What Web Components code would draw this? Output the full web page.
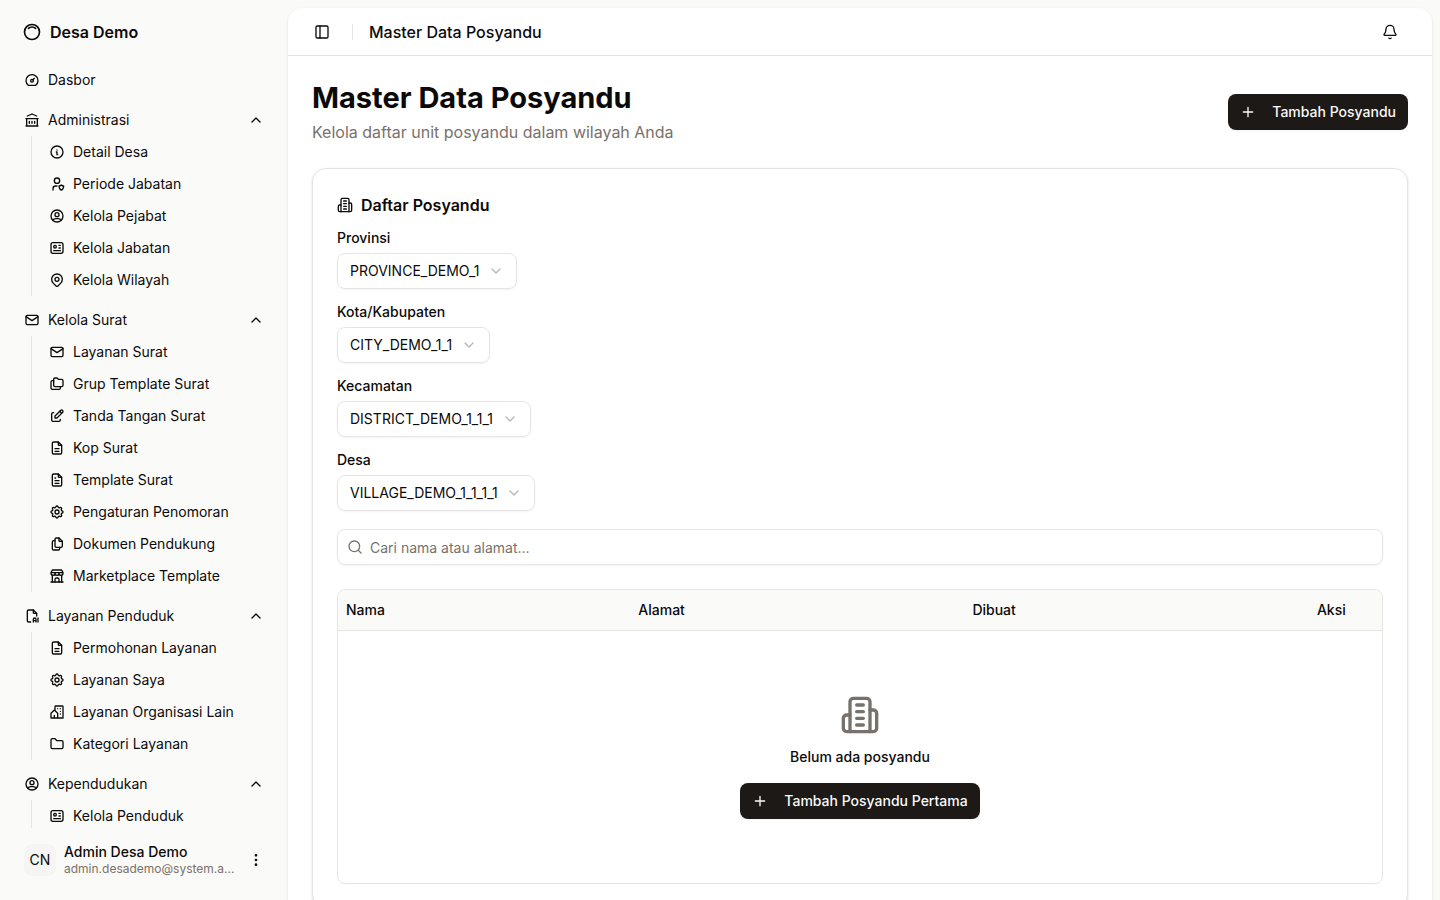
<!DOCTYPE html>
<html lang="id">
<head>
<meta charset="UTF-8">
<meta name="viewport" content="width=device-width, initial-scale=1">
<title>Master Data Posyandu</title>
<style>
    :root {
        --background: #ffffff;
        --sidebar: #fafaf9;
        --foreground: #0c0a09;
        --muted: #f5f5f4;
        --muted-foreground: #79716b;
        --border: #e7e5e4;
        --primary: #1c1917;
        --primary-foreground: #fafaf9;
        --shadow-xs: 0 1px 2px rgba(0, 0, 0, 0.05);
        --shadow-sm: 0 1px 3px rgba(0, 0, 0, 0.1), 0 1px 2px -1px rgba(0, 0, 0, 0.1);
    }

    body {
        margin: 0;
        background: var(--sidebar);
        color: var(--foreground);
        font-family: Inter, "Liberation Sans", sans-serif;
        font-size: 14px;
        line-height: 20px;
    }
</style>
</head>
<body>
<app-layout>
    <app-sidebar slot="sidebar" name="Desa Demo">
        <nav-item icon="dashboard">Dasbor</nav-item>
        <nav-group icon="bank" label="Administrasi">
            <nav-item icon="info">Detail Desa</nav-item>
            <nav-item icon="user-shield">Periode Jabatan</nav-item>
            <nav-item icon="user-circle">Kelola Pejabat</nav-item>
            <nav-item icon="id">Kelola Jabatan</nav-item>
            <nav-item icon="map-pin">Kelola Wilayah</nav-item>
        </nav-group>
        <nav-group icon="mail" label="Kelola Surat">
            <nav-item icon="mail">Layanan Surat</nav-item>
            <nav-item icon="folders">Grup Template Surat</nav-item>
            <nav-item icon="edit">Tanda Tangan Surat</nav-item>
            <nav-item icon="file-description">Kop Surat</nav-item>
            <nav-item icon="file-text">Template Surat</nav-item>
            <nav-item icon="settings">Pengaturan Penomoran</nav-item>
            <nav-item icon="files">Dokumen Pendukung</nav-item>
            <nav-item icon="store">Marketplace Template</nav-item>
        </nav-group>
        <nav-group icon="file-ai" label="Layanan Penduduk">
            <nav-item icon="file-description">Permohonan Layanan</nav-item>
            <nav-item icon="settings">Layanan Saya</nav-item>
            <nav-item icon="community">Layanan Organisasi Lain</nav-item>
            <nav-item icon="folder">Kategori Layanan</nav-item>
        </nav-group>
        <nav-group icon="user-circle" label="Kependudukan">
            <nav-item icon="id">Kelola Penduduk</nav-item>
        </nav-group>
        <user-menu slot="footer" initials="CN" name="Admin Desa Demo" email="admin.desademo@system.a..."></user-menu>
    </app-sidebar>

    <site-header>Master Data Posyandu</site-header>
    <page-content>
        <page-title heading="Master Data Posyandu" description="Kelola daftar unit posyandu dalam wilayah Anda">
            <app-button icon="plus">Tambah Posyandu</app-button>
        </page-title>
        <app-card icon="building" heading="Daftar Posyandu">
            <filter-list>
                <select-field label="Provinsi" value="PROVINCE_DEMO_1"></select-field>
                <select-field label="Kota/Kabupaten" value="CITY_DEMO_1_1"></select-field>
                <select-field label="Kecamatan" value="DISTRICT_DEMO_1_1_1"></select-field>
                <select-field label="Desa" value="VILLAGE_DEMO_1_1_1_1"></select-field>
            </filter-list>
            <search-field placeholder="Cari nama atau alamat..."></search-field>
            <posyandu-table>
                <empty-state icon="building" message="Belum ada posyandu">
                    <app-button icon="plus">Tambah Posyandu Pertama</app-button>
                </empty-state>
            </posyandu-table>
        </app-card>
    </page-content>
</app-layout>

<script>
const ICONS = {
    'logo': '<path d="M5.636 5.636a9 9 0 1 0 12.728 12.728a9 9 0 0 0 -12.728 -12.728z"/><path d="M16.243 7.757a6 6 0 0 0 -8.486 0"/>',
    'dashboard': '<circle cx="12" cy="13" r="2"/><path d="M13.45 11.55l2.05 -2.05"/><path d="M6.4 20a9 9 0 1 1 11.2 0z"/>',
    'bank': '<path d="M3 21h18M3 10h18M5 6l7 -3l7 3M4 10v11M20 10v11M8 14v3M12 14v3M16 14v3"/>',
    'info': '<circle cx="12" cy="12" r="9"/><path d="M12 9h.01M11 12h1v4h1"/>',
    'user-shield': '<path d="M6 21v-2a4 4 0 0 1 4 -4h2"/><path d="M22 15c0 4 -2.5 6 -3.5 6s-3.5 -2 -3.5 -6c1 0 2.5 -.5 3.5 -1.5c1 1 2.5 1.5 3.5 1.5z"/><circle cx="12" cy="7" r="4"/>',
    'user-circle': '<circle cx="12" cy="12" r="9"/><circle cx="12" cy="10" r="3"/><path d="M6.168 18.849a4 4 0 0 1 3.832 -2.849h4a4 4 0 0 1 3.834 2.855"/>',
    'id': '<rect x="3" y="4" width="18" height="16" rx="3"/><circle cx="9" cy="10" r="2"/><path d="M15 8h2M15 12h2M7 16h10"/>',
    'map-pin': '<circle cx="12" cy="11" r="3"/><path d="M17.657 16.657l-4.243 4.243a2 2 0 0 1 -2.827 0l-4.244 -4.243a8 8 0 1 1 11.314 0z"/>',
    'mail': '<rect x="3" y="5" width="18" height="14" rx="2"/><path d="M3 7l9 6l9 -6"/>',
    'folders': '<path d="M9 3h3l2 2h5a2 2 0 0 1 2 2v7a2 2 0 0 1 -2 2h-10a2 2 0 0 1 -2 -2v-9a2 2 0 0 1 2 -2"/><path d="M17 16v2a2 2 0 0 1 -2 2h-10a2 2 0 0 1 -2 -2v-9a2 2 0 0 1 2 -2h2"/>',
    'edit': '<path d="M7 7h-1a2 2 0 0 0 -2 2v9a2 2 0 0 0 2 2h9a2 2 0 0 0 2 -2v-1"/><path d="M20.385 6.585a2.1 2.1 0 0 0 -2.97 -2.97l-8.415 8.385v3h3l8.385 -8.415z"/><path d="M16 5l3 3"/>',
    'file-description': '<path d="M14 3v4a1 1 0 0 0 1 1h4"/><path d="M17 21h-10a2 2 0 0 1 -2 -2v-14a2 2 0 0 1 2 -2h7l5 5v11a2 2 0 0 1 -2 2z"/><path d="M9 17h6M9 13h6"/>',
    'file-text': '<path d="M14 3v4a1 1 0 0 0 1 1h4"/><path d="M17 21h-10a2 2 0 0 1 -2 -2v-14a2 2 0 0 1 2 -2h7l5 5v11a2 2 0 0 1 -2 2z"/><path d="M9 9h1M9 13h6M9 17h6"/>',
    'settings': '<path d="M10.325 4.317c.426 -1.756 2.924 -1.756 3.35 0a1.724 1.724 0 0 0 2.573 1.066c1.543 -.94 3.31 .826 2.37 2.37a1.724 1.724 0 0 0 1.065 2.572c1.756 .426 1.756 2.924 0 3.35a1.724 1.724 0 0 0 -1.066 2.573c.94 1.543 -.826 3.31 -2.37 2.37a1.724 1.724 0 0 0 -2.572 1.065c-.426 1.756 -2.924 1.756 -3.35 0a1.724 1.724 0 0 0 -2.573 -1.066c-1.543 .94 -3.31 -.826 -2.37 -2.37a1.724 1.724 0 0 0 -1.065 -2.572c-1.756 -.426 -1.756 -2.924 0 -3.35a1.724 1.724 0 0 0 1.066 -2.573c-.94 -1.543 .826 -3.31 2.37 -2.37c1 .608 2.296 .07 2.572 -1.065z"/><circle cx="12" cy="12" r="3"/>',
    'files': '<path d="M15 3v4a1 1 0 0 0 1 1h4"/><path d="M18 17h-7a2 2 0 0 1 -2 -2v-10a2 2 0 0 1 2 -2h4l5 5v7a2 2 0 0 1 -2 2z"/><path d="M16 17v2a2 2 0 0 1 -2 2h-7a2 2 0 0 1 -2 -2v-10a2 2 0 0 1 2 -2h2"/>',
    'store': '<path d="M3 21h18"/><path d="M3 7v1a3 3 0 0 0 6 0v-1m0 1a3 3 0 0 0 6 0v-1m0 1a3 3 0 0 0 6 0v-1h-18l2 -4h14l2 4"/><path d="M5 21v-10.15M19 21v-10.15"/><path d="M9 21v-4a2 2 0 0 1 2 -2h2a2 2 0 0 1 2 2v4"/>',
    'file-ai': '<path d="M14 3v4a1 1 0 0 0 1 1h4"/><path d="M10 21h-3a2 2 0 0 1 -2 -2v-14a2 2 0 0 1 2 -2h7l5 5v4"/><path d="M14 21v-4a2 2 0 1 1 4 0v4M14 19h4M21 15v6"/>',
    'community': '<path d="M8 9l5 5v7h-5v-4m0 4h-5v-7l5 -5m1 1v-6a1 1 0 0 1 1 -1h10a1 1 0 0 1 1 1v17h-8"/><path d="M13 7v.01M17 7v.01M17 11v.01M17 15v.01"/>',
    'folder': '<path d="M5 4h4l3 3h7a2 2 0 0 1 2 2v8a2 2 0 0 1 -2 2h-14a2 2 0 0 1 -2 -2v-11a2 2 0 0 1 2 -2"/>',
    'dots': '<circle cx="12" cy="12" r="1"/><circle cx="12" cy="19" r="1"/><circle cx="12" cy="5" r="1"/>',
    'chevron-up': '<path d="m18 15-6-6-6 6"/>',
    'chevron-down': '<path d="m6 9 6 6 6-6"/>',
    'panel': '<rect x="3" y="3" width="18" height="18" rx="2"/><path d="M9 3v18"/>',
    'bell': '<path d="M10.268 21a2 2 0 0 0 3.464 0"/><path d="M3.262 15.326A1 1 0 0 0 4 17h16a1 1 0 0 0 .74-1.673C19.41 13.956 18 12.499 18 8A6 6 0 0 0 6 8c0 4.499-1.411 5.956-2.738 7.326"/>',
    'plus': '<path d="M5 12h14M12 5v14"/>',
    'search': '<path d="m21 21-4.34-4.34"/><circle cx="11" cy="11" r="8"/>',
    'building': '<path d="M6 22V4a2 2 0 0 1 2-2h8a2 2 0 0 1 2 2v18Z"/><path d="M6 12H4a2 2 0 0 0-2 2v6a2 2 0 0 0 2 2h2"/><path d="M18 9h2a2 2 0 0 1 2 2v9a2 2 0 0 1-2 2h-2"/><path d="M10 6h4M10 10h4M10 14h4M10 18h4"/>'
};

// Base: each component only has to return its markup
class BaseElement extends HTMLElement {
    constructor() {
        super();
        this.attachShadow({ mode: 'open' });
    }

    connectedCallback() {
        this.shadowRoot.innerHTML = this.template();
    }

    attr(name) {
        return this.getAttribute(name) || '';
    }
}

class AppIcon extends BaseElement {
    template() {
        return `
            <style>
                :host { display: block; flex: none; width: 16px; height: 16px; }
                svg { display: block; width: 100%; height: 100%; }
            </style>
            <svg viewBox="0 0 24 24" fill="none" stroke="currentColor" stroke-width="2"
                stroke-linecap="round" stroke-linejoin="round" aria-hidden="true">${ICONS[this.attr('name')] || ''}</svg>
        `;
    }
}

class AppLayout extends BaseElement {
    template() {
        return `
            <style>
                :host { display: flex; align-items: stretch; min-height: 100vh; }
                main {
                    flex: 1;
                    min-width: 0;
                    margin: 8px 8px 8px 0;
                    background: var(--background);
                    border-radius: 14px;
                    box-shadow: var(--shadow-sm);
                }
            </style>
            <slot name="sidebar"></slot>
            <main><slot></slot></main>
        `;
    }
}

class AppSidebar extends BaseElement {
    template() {
        return `
            <style>
                :host {
                    display: flex;
                    flex-direction: column;
                    flex: none;
                    position: sticky;
                    top: 0;
                    box-sizing: border-box;
                    width: 288px;
                    height: 100vh;
                    padding: 8px;
                }
                header, footer { padding: 8px; }
                .brand {
                    display: flex;
                    align-items: center;
                    gap: 8px;
                    height: 32px;
                    padding: 0 6px;
                    color: inherit;
                    font-size: 16px;
                    font-weight: 600;
                    text-decoration: none;
                }
                .brand app-icon { width: 20px; height: 20px; }
                nav {
                    display: flex;
                    flex-direction: column;
                    gap: 8px;
                    flex: 1;
                    min-height: 0;
                    padding: 8px;
                    box-sizing: border-box;
                    overflow-y: auto;
                    scrollbar-width: none;
                }
            </style>
            <header>
                <a class="brand" href="#"><app-icon name="logo"></app-icon><span>${this.attr('name')}</span></a>
            </header>
            <nav><slot></slot></nav>
            <footer><slot name="footer"></slot></footer>
        `;
    }
}

class NavItem extends BaseElement {
    template() {
        return `
            <style>
                :host { display: block; flex: none; }
                a {
                    display: flex;
                    align-items: center;
                    gap: 8px;
                    height: 32px;
                    padding: 0 8px;
                    border-radius: 8px;
                    color: inherit;
                    text-decoration: none;
                    white-space: nowrap;
                }
                a:hover { background: var(--muted); }
            </style>
            <a href="#"><app-icon name="${this.attr('icon')}"></app-icon><span><slot></slot></span></a>
        `;
    }
}

class NavGroup extends BaseElement {
    connectedCallback() {
        super.connectedCallback();
        const button = this.shadowRoot.querySelector('button');
        const list = this.shadowRoot.querySelector('.list');
        button.addEventListener('click', () => {
            list.hidden = !list.hidden;
            button.setAttribute('aria-expanded', String(!list.hidden));
        });
    }

    template() {
        return `
            <style>
                :host { display: block; flex: none; }
                button {
                    display: flex;
                    align-items: center;
                    gap: 8px;
                    width: 100%;
                    height: 32px;
                    padding: 0 8px;
                    border: 0;
                    border-radius: 8px;
                    background: none;
                    color: inherit;
                    font: inherit;
                    text-align: left;
                }
                button:hover { background: var(--muted); }
                button span { flex: 1; }
                button[aria-expanded="false"] .chevron { transform: rotate(180deg); }
                .list {
                    margin-left: 15px;
                    padding-left: 9px;
                    border-left: 1px solid var(--border);
                }
            </style>
            <button type="button" aria-expanded="true">
                <app-icon name="${this.attr('icon')}"></app-icon>
                <span>${this.attr('label')}</span>
                <app-icon class="chevron" name="chevron-up"></app-icon>
            </button>
            <div class="list"><slot></slot></div>
        `;
    }
}

class UserMenu extends BaseElement {
    template() {
        return `
            <style>
                :host { display: block; }
                button {
                    display: flex;
                    align-items: center;
                    gap: 8px;
                    width: 100%;
                    height: 48px;
                    padding: 0 8px;
                    border: 0;
                    border-radius: 8px;
                    background: none;
                    color: inherit;
                    font: inherit;
                    text-align: left;
                }
                .avatar {
                    display: grid;
                    place-items: center;
                    flex: none;
                    width: 32px;
                    height: 32px;
                    border-radius: 8px;
                    background: var(--muted);
                }
                .info { display: grid; flex: 1; min-width: 0; }
                .name { font-weight: 500; line-height: 18px; }
                .email {
                    overflow: hidden;
                    color: var(--muted-foreground);
                    font-size: 12px;
                    line-height: 16px;
                    text-overflow: ellipsis;
                    white-space: nowrap;
                }
            </style>
            <button type="button">
                <span class="avatar">${this.attr('initials')}</span>
                <span class="info">
                    <span class="name">${this.attr('name')}</span>
                    <span class="email">${this.attr('email')}</span>
                </span>
                <app-icon name="dots"></app-icon>
            </button>
        `;
    }
}

class SiteHeader extends BaseElement {
    template() {
        return `
            <style>
                :host {
                    display: flex;
                    align-items: center;
                    gap: 16px;
                    box-sizing: border-box;
                    height: 48px;
                    padding: 0 24px 0 20px;
                    border-bottom: 1px solid var(--border);
                }
                button {
                    display: grid;
                    place-items: center;
                    width: 28px;
                    height: 28px;
                    padding: 0;
                    border: 0;
                    border-radius: 8px;
                    background: none;
                    color: inherit;
                }
                button:hover { background: var(--muted); }
                .bell { width: 36px; height: 36px; margin-left: auto; }
                .separator { width: 1px; height: 16px; background: var(--border); }
                .title { font-size: 16px; font-weight: 500; line-height: 24px; }
            </style>
            <button type="button" aria-label="Toggle Sidebar"><app-icon name="panel"></app-icon></button>
            <div class="separator"></div>
            <div class="title"><slot></slot></div>
            <button class="bell" type="button" aria-label="Notifikasi"><app-icon name="bell"></app-icon></button>
        `;
    }
}

class PageContent extends BaseElement {
    template() {
        return `
            <style>
                :host { display: flex; flex-direction: column; gap: 24px; padding: 24px; }
            </style>
            <slot></slot>
        `;
    }
}

class PageTitle extends BaseElement {
    template() {
        return `
            <style>
                :host { display: flex; align-items: center; justify-content: space-between; gap: 16px; }
                h1 { margin: 0 0 4px; font-size: 29px; font-weight: 700; line-height: 36px; }
                p { margin: 0; color: var(--muted-foreground); font-size: 16px; line-height: 24px; }
            </style>
            <div>
                <h1>${this.attr('heading')}</h1>
                <p>${this.attr('description')}</p>
            </div>
            <slot></slot>
        `;
    }
}

class AppButton extends BaseElement {
    template() {
        return `
            <style>
                :host { display: inline-block; }
                button {
                    display: flex;
                    align-items: center;
                    gap: 16px;
                    height: 36px;
                    padding: 0 12px;
                    border: 0;
                    border-radius: 8px;
                    background: var(--primary);
                    color: var(--primary-foreground);
                    font: inherit;
                    font-weight: 500;
                    white-space: nowrap;
                    box-shadow: var(--shadow-xs);
                }
                button:hover { opacity: 0.9; }
            </style>
            <button type="button"><app-icon name="${this.attr('icon')}"></app-icon><span><slot></slot></span></button>
        `;
    }
}

class AppCard extends BaseElement {
    template() {
        return `
            <style>
                :host {
                    display: block;
                    padding: 24px;
                    border: 1px solid var(--border);
                    border-radius: 14px;
                    background: var(--background);
                    box-shadow: var(--shadow-sm);
                }
                h2 {
                    display: flex;
                    align-items: center;
                    gap: 8px;
                    margin: 0 0 14px;
                    font-size: 16px;
                    font-weight: 600;
                    line-height: 24px;
                }
            </style>
            <h2><app-icon name="${this.attr('icon')}"></app-icon><span>${this.attr('heading')}</span></h2>
            <slot></slot>
        `;
    }
}

class FilterList extends BaseElement {
    template() {
        return `
            <style>
                :host { display: flex; flex-direction: column; align-items: flex-start; gap: 16px; margin-bottom: 18px; }
            </style>
            <slot></slot>
        `;
    }
}

class SelectField extends BaseElement {
    template() {
        return `
            <style>
                :host { display: grid; gap: 8px; }
                label { font-weight: 500; line-height: 14px; }
                .control { display: grid; align-items: center; justify-items: end; }
                .control > * { grid-area: 1 / 1; }
                select {
                    appearance: none;
                    height: 36px;
                    margin: 0;
                    padding: 0 36px 0 12px;
                    border: 1px solid var(--border);
                    border-radius: 8px;
                    background: transparent;
                    color: inherit;
                    font: inherit;
                    box-shadow: var(--shadow-xs);
                }
                app-icon { margin-right: 13px; color: var(--muted-foreground); opacity: 0.5; pointer-events: none; }
            </style>
            <label for="field">${this.attr('label')}</label>
            <div class="control">
                <select id="field"><option>${this.attr('value')}</option></select>
                <app-icon name="chevron-down"></app-icon>
            </div>
        `;
    }
}

class SearchField extends BaseElement {
    template() {
        return `
            <style>
                :host { display: grid; align-items: center; margin-bottom: 24px; }
                input, app-icon { grid-area: 1 / 1; }
                input {
                    box-sizing: border-box;
                    width: 100%;
                    height: 36px;
                    margin: 0;
                    padding: 0 12px 0 32px;
                    border: 1px solid var(--border);
                    border-radius: 8px;
                    background: transparent;
                    color: inherit;
                    font: inherit;
                    box-shadow: var(--shadow-xs);
                }
                input::placeholder { color: var(--muted-foreground); opacity: 1; }
                app-icon { margin-left: 10px; color: var(--muted-foreground); pointer-events: none; }
            </style>
            <input type="text" placeholder="${this.attr('placeholder')}" aria-label="${this.attr('placeholder')}">
            <app-icon name="search"></app-icon>
        `;
    }
}

class PosyanduTable extends BaseElement {
    template() {
        return `
            <style>
                :host { display: block; overflow: hidden; border: 1px solid var(--border); border-radius: 8px; }
                table { width: 100%; border-collapse: separate; border-spacing: 0; table-layout: fixed; }
                th {
                    box-sizing: border-box;
                    height: 41px;
                    padding: 0 8px;
                    border-bottom: 1px solid var(--border);
                    background: var(--sidebar);
                    font-weight: 500;
                    text-align: left;
                }
                td { padding: 0; }
                .nama { width: 28%; }
                .alamat { width: 32%; }
                .dibuat { width: 33%; }
                .aksi { width: 7%; }
            </style>
            <table>
                <thead>
                    <tr>
                        <th class="nama">Nama</th>
                        <th class="alamat">Alamat</th>
                        <th class="dibuat">Dibuat</th>
                        <th class="aksi">Aksi</th>
                    </tr>
                </thead>
                <tbody>
                    <tr><td colspan="4"><slot></slot></td></tr>
                </tbody>
            </table>
        `;
    }
}

class EmptyState extends BaseElement {
    template() {
        return `
            <style>
                :host { display: flex; flex-direction: column; align-items: center; padding: 64px 16px; }
                app-icon { width: 40px; height: 40px; color: var(--muted-foreground); }
                p { margin: 12px 0 16px; font-weight: 500; }
            </style>
            <app-icon name="${this.attr('icon')}"></app-icon>
            <p>${this.attr('message')}</p>
            <slot></slot>
        `;
    }
}

customElements.define('app-icon', AppIcon);
customElements.define('app-layout', AppLayout);
customElements.define('app-sidebar', AppSidebar);
customElements.define('nav-item', NavItem);
customElements.define('nav-group', NavGroup);
customElements.define('user-menu', UserMenu);
customElements.define('site-header', SiteHeader);
customElements.define('page-content', PageContent);
customElements.define('page-title', PageTitle);
customElements.define('app-button', AppButton);
customElements.define('app-card', AppCard);
customElements.define('filter-list', FilterList);
customElements.define('select-field', SelectField);
customElements.define('search-field', SearchField);
customElements.define('posyandu-table', PosyanduTable);
customElements.define('empty-state', EmptyState);
</script>
</body>
</html>
